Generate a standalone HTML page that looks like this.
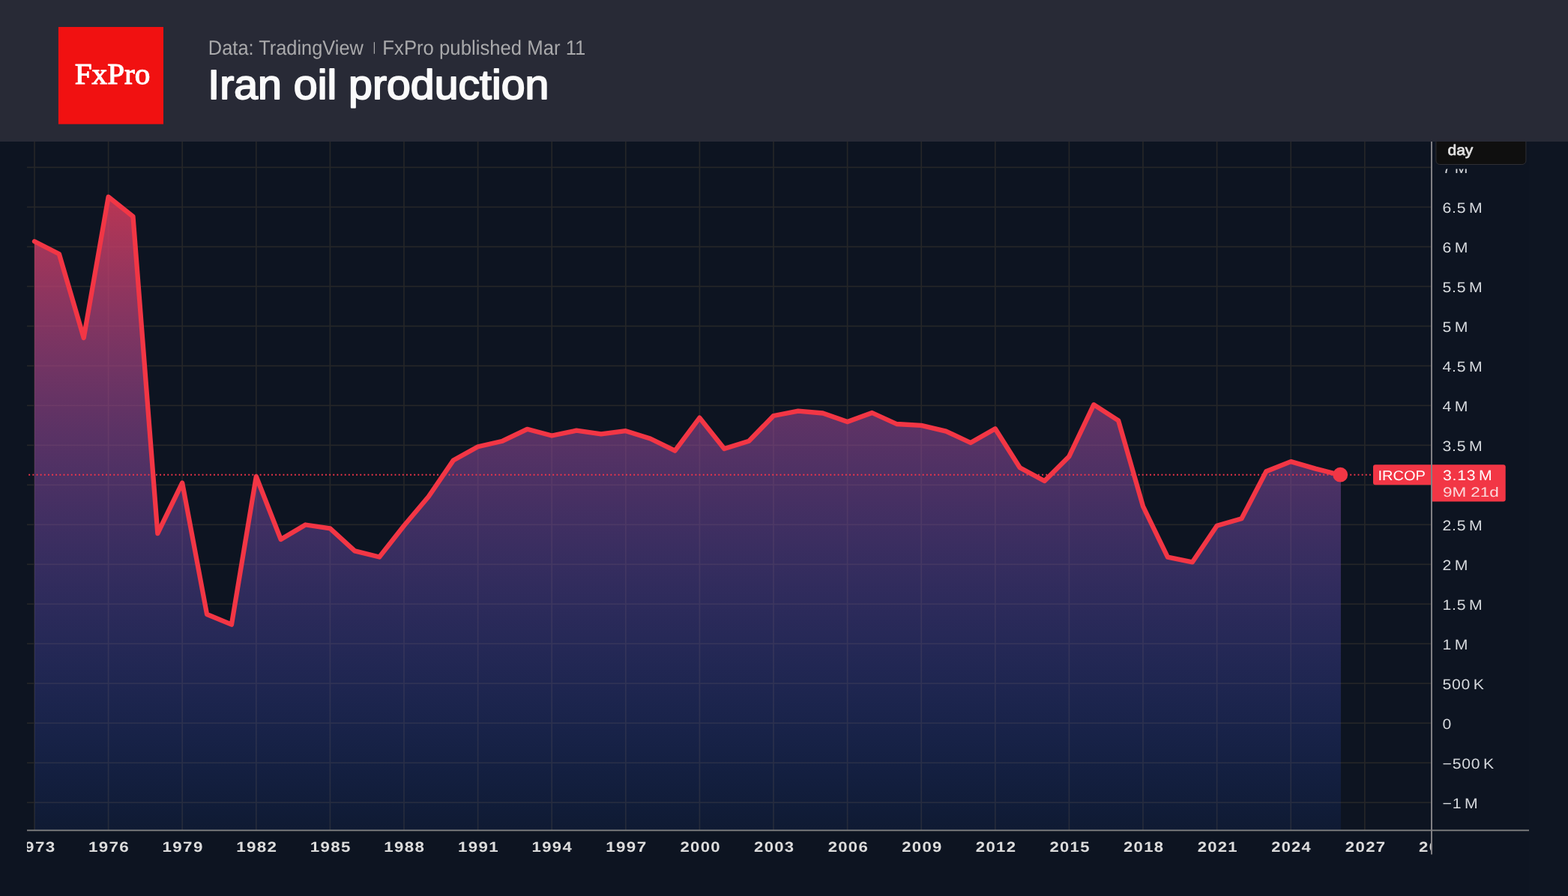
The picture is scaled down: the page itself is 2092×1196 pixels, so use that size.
<!DOCTYPE html>
<html lang="en"><head><meta charset="utf-8"><title>Iran oil production</title>
<style>
html,body{margin:0;padding:0;background:#0d1421;}
body{width:2092px;height:1196px;overflow:hidden;font-family:"Liberation Sans",sans-serif;}
svg{display:block;will-change:transform;transform:translateZ(0);}
text{white-space:pre;text-rendering:geometricPrecision;}
</style></head><body>
<svg width="2092" height="1196" viewBox="0 0 2092 1196">
<defs>
<linearGradient id="area" gradientUnits="userSpaceOnUse" x1="0" y1="140" x2="0" y2="1108">
<stop offset="0.0" stop-color="rgb(242,54,69)" stop-opacity="0.96"/>
<stop offset="1.0" stop-color="rgb(41,98,255)" stop-opacity="0.08"/>
</linearGradient>
<clipPath id="pane"><rect x="36.0" y="189.0" width="1874.0" height="919.4000000000001"/></clipPath>
<clipPath id="xax"><rect x="36.0" y="1108.4" width="1873.0" height="60"/></clipPath>
<clipPath id="c7m"><rect x="1912" y="225.6" width="180" height="20"/></clipPath>
</defs>
<rect x="0" y="0" width="2092" height="1196" fill="#0d1421"/>
<rect x="2040" y="189.0" width="52" height="1007.0" fill="#0e1522"/>

<g fill="#252628"><rect x="45.15" y="189.0" width="1.7" height="919.40"/><rect x="143.75" y="189.0" width="1.7" height="919.40"/><rect x="242.35" y="189.0" width="1.7" height="919.40"/><rect x="340.95" y="189.0" width="1.7" height="919.40"/><rect x="439.55" y="189.0" width="1.7" height="919.40"/><rect x="538.15" y="189.0" width="1.7" height="919.40"/><rect x="636.76" y="189.0" width="1.7" height="919.40"/><rect x="735.36" y="189.0" width="1.7" height="919.40"/><rect x="833.96" y="189.0" width="1.7" height="919.40"/><rect x="932.56" y="189.0" width="1.7" height="919.40"/><rect x="1031.16" y="189.0" width="1.7" height="919.40"/><rect x="1129.76" y="189.0" width="1.7" height="919.40"/><rect x="1228.36" y="189.0" width="1.7" height="919.40"/><rect x="1326.96" y="189.0" width="1.7" height="919.40"/><rect x="1425.56" y="189.0" width="1.7" height="919.40"/><rect x="1524.16" y="189.0" width="1.7" height="919.40"/><rect x="1622.77" y="189.0" width="1.7" height="919.40"/><rect x="1721.37" y="189.0" width="1.7" height="919.40"/><rect x="1819.97" y="189.0" width="1.7" height="919.40"/><rect x="36.0" y="222.54" width="1874.00" height="1.7"/><rect x="36.0" y="275.53" width="1874.00" height="1.7"/><rect x="36.0" y="328.52" width="1874.00" height="1.7"/><rect x="36.0" y="381.51" width="1874.00" height="1.7"/><rect x="36.0" y="434.50" width="1874.00" height="1.7"/><rect x="36.0" y="487.49" width="1874.00" height="1.7"/><rect x="36.0" y="540.48" width="1874.00" height="1.7"/><rect x="36.0" y="593.47" width="1874.00" height="1.7"/><rect x="36.0" y="646.46" width="1874.00" height="1.7"/><rect x="36.0" y="699.45" width="1874.00" height="1.7"/><rect x="36.0" y="752.44" width="1874.00" height="1.7"/><rect x="36.0" y="805.43" width="1874.00" height="1.7"/><rect x="36.0" y="858.42" width="1874.00" height="1.7"/><rect x="36.0" y="911.41" width="1874.00" height="1.7"/><rect x="36.0" y="964.40" width="1874.00" height="1.7"/><rect x="36.0" y="1017.39" width="1874.00" height="1.7"/><rect x="36.0" y="1070.38" width="1874.00" height="1.7"/></g>
<path d="M46.00,322.30 L78.87,339.00 L111.73,451.00 L144.60,262.80 L177.47,289.00 L210.33,712.00 L243.20,644.50 L276.07,820.00 L308.94,833.70 L341.80,636.00 L374.67,720.00 L407.54,700.50 L440.40,705.40 L473.27,735.40 L506.14,743.50 L539.00,701.70 L571.87,662.70 L604.74,614.60 L637.61,596.30 L670.47,588.70 L703.34,572.80 L736.21,581.50 L769.07,574.70 L801.94,579.30 L834.81,575.20 L867.67,585.50 L900.54,601.70 L933.41,557.70 L966.28,599.00 L999.14,588.70 L1032.01,555.00 L1064.88,548.70 L1097.74,551.50 L1130.61,563.00 L1163.48,551.00 L1196.34,566.00 L1229.21,567.90 L1262.08,575.60 L1294.95,591.00 L1327.81,572.30 L1360.68,624.20 L1393.55,642.00 L1426.41,609.20 L1459.28,540.20 L1492.15,561.30 L1525.01,675.80 L1557.88,743.70 L1590.75,750.40 L1623.62,701.80 L1656.48,692.30 L1689.35,629.20 L1722.22,616.10 L1755.08,625.60 L1787.95,634.00 L1788.95,634.00 L1788.95,1108.40 L46.00,1108.40 Z" fill="url(#area)"/>
<line x1="38.3" y1="633.8" x2="1832.0" y2="633.8" stroke="#f6364a" stroke-width="1.9" stroke-dasharray="1.8 3.34"/>
<path d="M46.00,322.30 L78.87,339.00 L111.73,451.00 L144.60,262.80 L177.47,289.00 L210.33,712.00 L243.20,644.50 L276.07,820.00 L308.94,833.70 L341.80,636.00 L374.67,720.00 L407.54,700.50 L440.40,705.40 L473.27,735.40 L506.14,743.50 L539.00,701.70 L571.87,662.70 L604.74,614.60 L637.61,596.30 L670.47,588.70 L703.34,572.80 L736.21,581.50 L769.07,574.70 L801.94,579.30 L834.81,575.20 L867.67,585.50 L900.54,601.70 L933.41,557.70 L966.28,599.00 L999.14,588.70 L1032.01,555.00 L1064.88,548.70 L1097.74,551.50 L1130.61,563.00 L1163.48,551.00 L1196.34,566.00 L1229.21,567.90 L1262.08,575.60 L1294.95,591.00 L1327.81,572.30 L1360.68,624.20 L1393.55,642.00 L1426.41,609.20 L1459.28,540.20 L1492.15,561.30 L1525.01,675.80 L1557.88,743.70 L1590.75,750.40 L1623.62,701.80 L1656.48,692.30 L1689.35,629.20 L1722.22,616.10 L1755.08,625.60 L1787.95,634.00" fill="none" stroke="#f23645" stroke-width="6.3" stroke-linejoin="round" stroke-linecap="round"/>
<circle cx="1788.25" cy="633.7" r="9.9" fill="#f23645"/>
<rect x="0" y="0" width="2092" height="189.0" fill="#282a36"/>
<rect x="77.9" y="36" width="140.1" height="129.7" fill="#f11111"/>
<text transform="translate(99.68 112.00) scale(1.0406 1)" font-family="Liberation Serif, serif" font-size="39.60" fill="#ffffff" stroke="#ffffff" stroke-width="1.11" stroke-linejoin="round" >FxPro</text>
<text transform="translate(277.87 72.90) scale(0.9338 1)" font-family="Liberation Sans, sans-serif" font-size="27.20" fill="#a9a9ab" >Data: TradingView</text>
<rect x="498.8" y="56.2" width="1.2" height="15.6" fill="#a9a9ab"/>
<text transform="translate(510.34 72.90) scale(0.9457 1)" font-family="Liberation Sans, sans-serif" font-size="27.20" fill="#a9a9ab" >FxPro published Mar 11</text>
<text transform="translate(277.31 131.60) scale(1.0374 1)" font-family="Liberation Sans, sans-serif" font-size="55.20" fill="#fafafa" stroke="#fafafa" stroke-width="1.88" stroke-linejoin="round" >Iran oil production</text>
<rect x="36.0" y="1107.50" width="2004.0" height="1.8" fill="#838383"/>
<rect x="1909.00" y="189.0" width="2" height="951.50" fill="#818084"/>
<g clip-path="url(#c7m)"><text transform="translate(1924.54 230.99) scale(1.1000 1)" font-family="Liberation Sans, sans-serif" font-size="19.30" fill="#d6d9dd" letter-spacing="0.66" word-spacing="-2.61" >7 M</text></g>
<text transform="translate(1924.54 283.98) scale(1.1000 1)" font-family="Liberation Sans, sans-serif" font-size="19.30" fill="#d6d9dd" letter-spacing="0.66" word-spacing="-2.61" >6.5 M</text>
<text transform="translate(1924.54 336.97) scale(1.1000 1)" font-family="Liberation Sans, sans-serif" font-size="19.30" fill="#d6d9dd" letter-spacing="0.66" word-spacing="-2.61" >6 M</text>
<text transform="translate(1924.54 389.96) scale(1.1000 1)" font-family="Liberation Sans, sans-serif" font-size="19.30" fill="#d6d9dd" letter-spacing="0.66" word-spacing="-2.61" >5.5 M</text>
<text transform="translate(1924.54 442.95) scale(1.1000 1)" font-family="Liberation Sans, sans-serif" font-size="19.30" fill="#d6d9dd" letter-spacing="0.66" word-spacing="-2.61" >5 M</text>
<text transform="translate(1924.54 495.94) scale(1.1000 1)" font-family="Liberation Sans, sans-serif" font-size="19.30" fill="#d6d9dd" letter-spacing="0.66" word-spacing="-2.61" >4.5 M</text>
<text transform="translate(1924.54 548.93) scale(1.1000 1)" font-family="Liberation Sans, sans-serif" font-size="19.30" fill="#d6d9dd" letter-spacing="0.66" word-spacing="-2.61" >4 M</text>
<text transform="translate(1924.54 601.92) scale(1.1000 1)" font-family="Liberation Sans, sans-serif" font-size="19.30" fill="#d6d9dd" letter-spacing="0.66" word-spacing="-2.61" >3.5 M</text>
<text transform="translate(1924.54 707.90) scale(1.1000 1)" font-family="Liberation Sans, sans-serif" font-size="19.30" fill="#d6d9dd" letter-spacing="0.66" word-spacing="-2.61" >2.5 M</text>
<text transform="translate(1924.54 760.89) scale(1.1000 1)" font-family="Liberation Sans, sans-serif" font-size="19.30" fill="#d6d9dd" letter-spacing="0.66" word-spacing="-2.61" >2 M</text>
<text transform="translate(1924.54 813.88) scale(1.1000 1)" font-family="Liberation Sans, sans-serif" font-size="19.30" fill="#d6d9dd" letter-spacing="0.66" word-spacing="-2.61" >1.5 M</text>
<text transform="translate(1924.54 866.87) scale(1.1000 1)" font-family="Liberation Sans, sans-serif" font-size="19.30" fill="#d6d9dd" letter-spacing="0.66" word-spacing="-2.61" >1 M</text>
<text transform="translate(1924.54 919.86) scale(1.1000 1)" font-family="Liberation Sans, sans-serif" font-size="19.30" fill="#d6d9dd" letter-spacing="0.66" word-spacing="-2.61" >500 K</text>
<text transform="translate(1924.54 972.85) scale(1.1000 1)" font-family="Liberation Sans, sans-serif" font-size="19.30" fill="#d6d9dd" letter-spacing="0.66" word-spacing="-2.61" >0</text>
<text transform="translate(1924.54 1025.84) scale(1.1000 1)" font-family="Liberation Sans, sans-serif" font-size="19.30" fill="#d6d9dd" letter-spacing="0.66" word-spacing="-2.61" >−500 K</text>
<text transform="translate(1924.54 1078.83) scale(1.1000 1)" font-family="Liberation Sans, sans-serif" font-size="19.30" fill="#d6d9dd" letter-spacing="0.66" word-spacing="-2.61" >−1 M</text>
<rect x="1915.9" y="181.0" width="120" height="38.50" rx="5" ry="5" fill="#0f0f0f" stroke="#2f2f34" stroke-width="1"/>
<rect x="1900" y="179.0" width="160" height="10" fill="#282a36"/>
<text transform="translate(1931.48 206.50) scale(1.0713 1)" font-family="Liberation Sans, sans-serif" font-size="19.60" fill="#e1e1e1" stroke="#e1e1e1" stroke-width="0.69" stroke-linejoin="round" >day</text>
<path d="M1910.0,620.2 H1835 a3,3 0 0 0 -3,3 V644.2 a3,3 0 0 0 3,3 H1910.0 Z" fill="#f23645"/>
<path d="M1910.0,620.2 H2005.7 a3,3 0 0 1 3,3 V666.4 a3,3 0 0 1 -3,3 H1910.0 Z" fill="#f23645"/>
<rect x="1909.00" y="619" width="2" height="52" fill="#818084"/>
<text transform="translate(1838.50 640.70) scale(1.0888 1)" font-family="Liberation Sans, sans-serif" font-size="18.40" fill="#ffffff" >IRCOP</text>
<text transform="translate(1925.04 640.70) scale(1.1000 1)" font-family="Liberation Sans, sans-serif" font-size="19.30" fill="#ffffff" letter-spacing="0.66" word-spacing="-2.61" >3.13 M</text>
<text transform="translate(1924.89 663.10) scale(1.2420 1)" font-family="Liberation Sans, sans-serif" font-size="18.10" fill="#fbd7da" >9M 21d</text>
<g clip-path="url(#xax)"><text transform="translate(19.34 1137.40) scale(1.1659 1)" font-family="Liberation Sans, sans-serif" font-size="19.20" fill="#dcdcdc" font-weight="bold" letter-spacing="1.15" >1973</text><text transform="translate(117.95 1137.40) scale(1.1659 1)" font-family="Liberation Sans, sans-serif" font-size="19.20" fill="#dcdcdc" font-weight="bold" letter-spacing="1.15" >1976</text><text transform="translate(216.55 1137.40) scale(1.1659 1)" font-family="Liberation Sans, sans-serif" font-size="19.20" fill="#dcdcdc" font-weight="bold" letter-spacing="1.15" >1979</text><text transform="translate(315.14 1137.40) scale(1.1685 1)" font-family="Liberation Sans, sans-serif" font-size="19.20" fill="#dcdcdc" font-weight="bold" letter-spacing="1.15" >1982</text><text transform="translate(413.75 1137.40) scale(1.1634 1)" font-family="Liberation Sans, sans-serif" font-size="19.20" fill="#dcdcdc" font-weight="bold" letter-spacing="1.15" >1985</text><text transform="translate(512.35 1137.40) scale(1.1634 1)" font-family="Liberation Sans, sans-serif" font-size="19.20" fill="#dcdcdc" font-weight="bold" letter-spacing="1.15" >1988</text><text transform="translate(610.95 1137.40) scale(1.1634 1)" font-family="Liberation Sans, sans-serif" font-size="19.20" fill="#dcdcdc" font-weight="bold" letter-spacing="1.15" >1991</text><text transform="translate(709.57 1137.40) scale(1.1510 1)" font-family="Liberation Sans, sans-serif" font-size="19.20" fill="#dcdcdc" font-weight="bold" letter-spacing="1.15" >1994</text><text transform="translate(808.15 1137.40) scale(1.1710 1)" font-family="Liberation Sans, sans-serif" font-size="19.20" fill="#dcdcdc" font-weight="bold" letter-spacing="1.15" >1997</text><text transform="translate(907.43 1137.40) scale(1.1534 1)" font-family="Liberation Sans, sans-serif" font-size="19.20" fill="#dcdcdc" font-weight="bold" letter-spacing="1.15" >2000</text><text transform="translate(1006.04 1137.40) scale(1.1510 1)" font-family="Liberation Sans, sans-serif" font-size="19.20" fill="#dcdcdc" font-weight="bold" letter-spacing="1.15" >2003</text><text transform="translate(1104.64 1137.40) scale(1.1510 1)" font-family="Liberation Sans, sans-serif" font-size="19.20" fill="#dcdcdc" font-weight="bold" letter-spacing="1.15" >2006</text><text transform="translate(1203.24 1137.40) scale(1.1510 1)" font-family="Liberation Sans, sans-serif" font-size="19.20" fill="#dcdcdc" font-weight="bold" letter-spacing="1.15" >2009</text><text transform="translate(1301.84 1137.40) scale(1.1534 1)" font-family="Liberation Sans, sans-serif" font-size="19.20" fill="#dcdcdc" font-weight="bold" letter-spacing="1.15" >2012</text><text transform="translate(1400.44 1137.40) scale(1.1485 1)" font-family="Liberation Sans, sans-serif" font-size="19.20" fill="#dcdcdc" font-weight="bold" letter-spacing="1.15" >2015</text><text transform="translate(1499.04 1137.40) scale(1.1485 1)" font-family="Liberation Sans, sans-serif" font-size="19.20" fill="#dcdcdc" font-weight="bold" letter-spacing="1.15" >2018</text><text transform="translate(1597.64 1137.40) scale(1.1485 1)" font-family="Liberation Sans, sans-serif" font-size="19.20" fill="#dcdcdc" font-weight="bold" letter-spacing="1.15" >2021</text><text transform="translate(1696.25 1137.40) scale(1.1364 1)" font-family="Liberation Sans, sans-serif" font-size="19.20" fill="#dcdcdc" font-weight="bold" letter-spacing="1.15" >2024</text><text transform="translate(1794.84 1137.40) scale(1.1559 1)" font-family="Liberation Sans, sans-serif" font-size="19.20" fill="#dcdcdc" font-weight="bold" letter-spacing="1.15" >2027</text><text transform="translate(1893.04 1137.40) scale(1.1534 1)" font-family="Liberation Sans, sans-serif" font-size="19.20" fill="#dcdcdc" font-weight="bold" letter-spacing="1.15" >2030</text></g>
</svg>
</body></html>
